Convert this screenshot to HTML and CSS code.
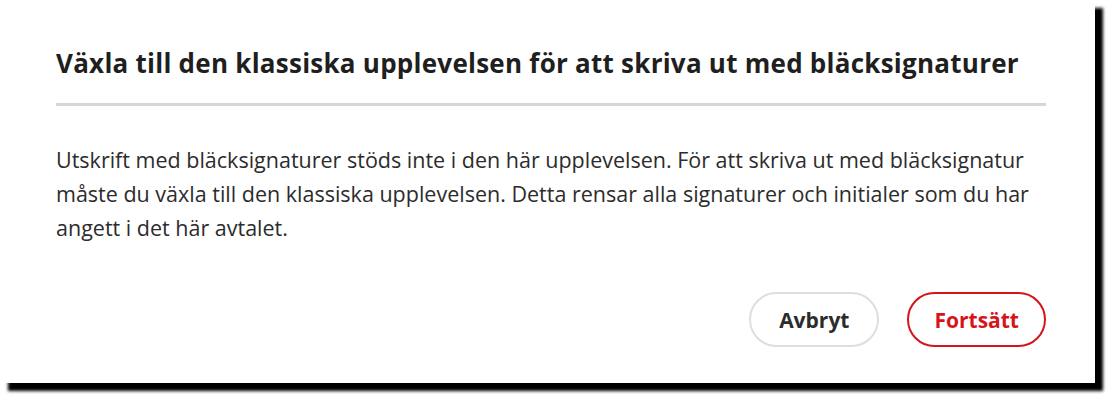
FILE: index.html
```html
<!DOCTYPE html>
<html lang="sv">
<head>
<meta charset="utf-8">
<link rel="stylesheet" href="styles.css">
</head>
<body>
<div class="dialog">
  <h1 class="title">Växla till den klassiska upplevelsen för att skriva ut med bläcksignaturer</h1>
  <div class="divider"></div>
  <p class="content">Utskrift med bläcksignaturer stöds inte i den här upplevelsen. För att skriva ut med bläcksignatur måste du växla till den klassiska upplevelsen. Detta rensar alla signaturer och initialer som du har angett i det här avtalet.</p>
  <div class="actions">
    <button class="btn btn-secondary">Avbryt</button>
    <button class="btn btn-primary">Fortsätt</button>
  </div>
</div>
</body>
</html>
```
FILE: styles.css
```css
html, body {
  margin: 0;
  padding: 0;
  background: #ffffff;
}
body {
  width: 1112px;
  height: 409px;
  overflow: hidden;
  font-family: "Open Sans", "Noto Sans", sans-serif;
}
.dialog {
  box-sizing: border-box;
  width: 1095px;
  height: 383px;
  background: #ffffff;
  box-shadow: 8px 8px 3px #000000;
  padding: 44px 49px 0 56px;
  display: flex;
  flex-direction: column;
}
.title {
  margin: 0;
  font-size: 26px;
  line-height: 38px;
  font-weight: 700;
  color: #1f1f1f;
  letter-spacing: 0.25px;
  white-space: nowrap;
}
.divider {
  height: 3px;
  background: #d6d6d6;
  margin-top: 21px;
}
.content {
  margin: 37px 0 0 0;
  font-size: 21.5px;
  line-height: 34px;
  color: #2c2c2c;
}
.actions {
  display: flex;
  justify-content: flex-end;
  gap: 28px;
  margin-top: 47px;
}
.btn {
  font-family: inherit;
  font-size: 21px;
  font-weight: 700;
  height: 55px;
  border-radius: 28px;
  background: #ffffff;
  cursor: pointer;
}
.btn-secondary {
  border: 2px solid #dedede;
  color: #2c2c2c;
  padding: 0 28px;
}
.btn-primary {
  border: 2px solid #d7141a;
  color: #d7141a;
  padding: 0 25px;
}
```
